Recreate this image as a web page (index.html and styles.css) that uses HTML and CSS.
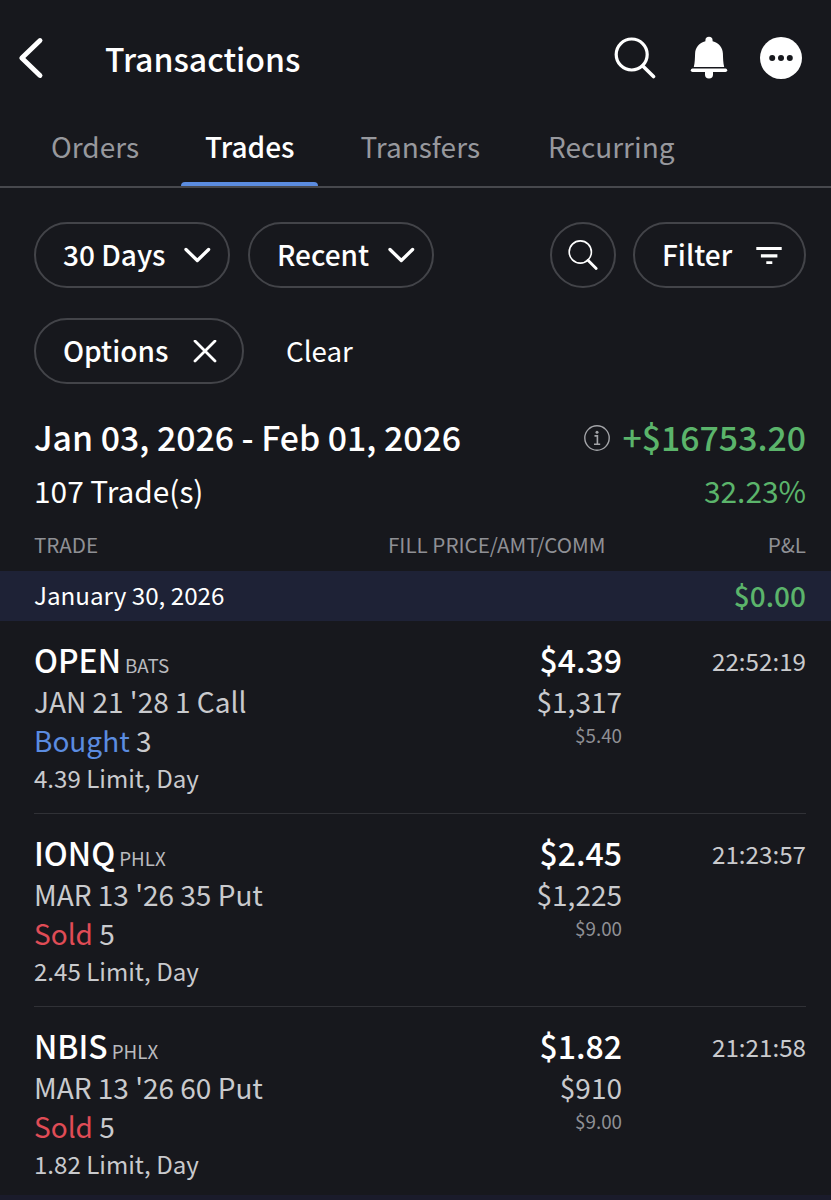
FILE: index.html
```
<!DOCTYPE html>
<html lang="en">
<head>
<meta charset="utf-8">
<title>Transactions</title>
<link rel="stylesheet" href="styles.css">
</head>
<body>
<div class="app">
  <header class="header">
    <svg class="back" viewBox="0 0 26 42" width="26" height="42"><path d="M22 3.500 3.800 21 22 38.500" fill="none" stroke="#fff" stroke-width="4.900" stroke-linecap="round" stroke-linejoin="round"/></svg>
    <h1 class="title">Transactions</h1>
    <div class="actions">
      <svg viewBox="0 0 42 42" width="42" height="42" fill="none" stroke="#fff" stroke-linecap="round"><circle cx="17.700" cy="17.500" r="15.500" stroke-width="3.200"/><path d="M28.800 29 39.500 39.500" stroke-width="3.600"/></svg>
      <svg viewBox="0 0 38 44" width="38" height="44" fill="#fff"><path d="M15.400 5.200V4.400a3.600 3.600 0 0 1 7.200 0v.8C29 6.900 32.600 11.500 32.900 17.500c.2 5 .2 9 1.300 13.500H3.800c1.100-4.500 1.100-8.500 1.300-13.500C5.400 11.500 9 6.900 15.400 5.200z"/><rect x=".8" y="32.600" width="36.400" height="3.400" rx="1.700"/><path d="M15 35h8v3.600a4 4 0 0 1-8 0z"/></svg>
      <svg viewBox="0 0 42 42" width="42" height="42"><circle cx="21" cy="21" r="21" fill="#fff"/><g fill="#17181d"><circle cx="12.200" cy="21" r="3"/><circle cx="21" cy="21" r="3"/><circle cx="29.800" cy="21" r="3"/></g></svg>
    </div>
  </header>

  <nav class="tabs">
    <a class="tab">Orders</a>
    <a class="tab active">Trades</a>
    <a class="tab">Transfers</a>
    <a class="tab">Recurring</a>
  </nav>

  <div class="filters">
    <button class="pill days"><span>30 Days</span><svg viewBox="0 0 28 18" width="28" height="18"><path d="M3 2.500 14.300 13.500 25.600 2.500" fill="none" stroke="#fff" stroke-width="3.300" stroke-linecap="round" stroke-linejoin="round"/></svg></button>
    <button class="pill recent"><span>Recent</span><svg viewBox="0 0 28 18" width="28" height="18"><path d="M3 2.500 14.300 13.500 25.600 2.500" fill="none" stroke="#fff" stroke-width="3.300" stroke-linecap="round" stroke-linejoin="round"/></svg></button>
    <button class="pill search"><svg viewBox="0 0 32 32" width="32" height="32" fill="none" stroke="#fff"><circle cx="13.300" cy="12" r="11.100" stroke-width="1.600"/><path d="M21 20.200 29.200 28.600" stroke-width="2.800" stroke-linecap="round"/></svg></button>
    <button class="pill filter"><span>Filter</span><svg viewBox="0 0 26 18" width="26" height="18" fill="#fff"><path d="M.300 0h25.400v2.900H.300zM4.900 7.200h16.500v3.300H4.900zM10.300 14.200h6v2.800h-6z"/></svg></button>
  </div>
  <div class="filters applied">
    <button class="pill options"><span>Options</span><svg viewBox="0 0 24 24" width="24" height="24"><path d="M2 1 22 21M22 1 2 21" fill="none" stroke="#fff" stroke-width="2.800" stroke-linecap="round"/></svg></button>
    <span class="clear">Clear</span>
  </div>

  <section class="summary">
    <div class="row total">
      <span>Jan 03, 2026 - Feb 01, 2026</span>
      <span class="gain"><svg viewBox="0 0 26 26" width="26" height="26" fill="none" stroke="#a3a4a8"><circle cx="13" cy="13" r="12.200" stroke-width="1.400"/><path d="M10.500 10.900h2.900V19M10 19.200h6.200" stroke-width="1.600"/><circle cx="13" cy="7.300" r="1.500" fill="#a3a4a8" stroke="none"/></svg>+$16753.20</span>
    </div>
    <div class="row count"><span>107 Trade(s)</span><span class="gain">32.23%</span></div>
    <div class="columns head"><span>TRADE</span><span>FILL PRICE/AMT/COMM</span><span>P&amp;L</span></div>
  </section>

  <div class="row day"><span>January 30, 2026</span><b class="gain">$0.00</b></div>

  <main>
    <article class="columns trade">
      <div><div class="symbol">OPEN<small>BATS</small></div><div class="contract">JAN 21 '28 1 Call</div><div class="side"><i class="buy">Bought</i> 3</div><div class="order">4.39 Limit, Day</div></div>
      <div><div class="price">$4.39</div><div class="amount">$1,317</div><div class="fee">$5.40</div></div>
      <time>22:52:19</time>
    </article>
    <article class="columns trade">
      <div><div class="symbol">IONQ<small>PHLX</small></div><div class="contract">MAR 13 '26 35 Put</div><div class="side"><i class="sell">Sold</i> 5</div><div class="order">2.45 Limit, Day</div></div>
      <div><div class="price">$2.45</div><div class="amount">$1,225</div><div class="fee">$9.00</div></div>
      <time>21:23:57</time>
    </article>
    <article class="columns trade">
      <div><div class="symbol">NBIS<small>PHLX</small></div><div class="contract">MAR 13 '26 60 Put</div><div class="side"><i class="sell">Sold</i> 5</div><div class="order">1.82 Limit, Day</div></div>
      <div><div class="price">$1.82</div><div class="amount">$910</div><div class="fee">$9.00</div></div>
      <time>21:21:58</time>
    </article>
  </main>
  <footer class="bottom"></footer>
</div>
</body>
</html>
```
FILE: styles.css
```
* { box-sizing: border-box; }
body {
  margin: 0;
  background: #17181d;
  color: #fff;
  font-family: "Noto Sans CJK SC", "Noto Sans", sans-serif;
}
svg { display: block; flex: none; }
.app { width: 831px; height: 1200px; overflow: hidden; display: flex; flex-direction: column; }

.header { height: 114px; flex: none; display: flex; align-items: center; padding: 2px 29px 0 18px; }
.title { margin: 0 0 0 61px; font-size: 32px; line-height: 40px; font-weight: 500; }
.actions { margin-left: auto; display: flex; align-items: center; gap: 32px; }
.actions svg:nth-child(2) { margin-left: 2px; }

.tabs {
  height: 74px; flex: none; display: flex; gap: 19px;
  padding-left: 28px; border-bottom: 2px solid #47484d;
}
.tab {
  position: relative; padding: 12px 23px 0; font-size: 28px; line-height: 40px; color: #97989d;
}
.tab.active { padding: 12px 24px 0; color: #fff; font-weight: 500; }
.tab:last-child { margin-left: 3px; }
.tab.active::after {
  content: ""; position: absolute; left: 0; right: 0; bottom: 0; height: 4px;
  background: #5b8ce0; border-radius: 4px 4px 0 0;
}

.filters { display: flex; align-items: center; padding: 34px 25px 0 34px; height: 100px; flex: none; }
.pill {
  height: 66px; padding: 0 17px 0 27px; display: flex; align-items: center; justify-content: space-between;
  background: none; border: 2px solid #434449; border-radius: 33px;
  color: #fff; font: 500 28px/36px "Noto Sans CJK SC", "Noto Sans", sans-serif;
}
.pill span { margin-top: -2px; }
.pill svg { margin-top: 1px; }
.days { width: 196px; }
.recent { width: 186px; margin-left: 18px; }
.search { width: 66px; margin-left: auto; padding: 0; justify-content: center; }
.filter { width: 173px; margin-left: 17px; padding-right: 22px; }
.applied { height: 96px; padding-top: 30px; }
.options { width: 210px; padding-right: 25px; }
.clear { margin: -3px 0 0 42px; font-size: 27.700px; line-height: 36px; }

.summary { height: 187px; flex: none; padding-top: 33px; }
.row { display: flex; justify-content: space-between; align-items: center; padding: 0 25px 0 34px; }
.total { height: 40px; font-size: 33.800px; line-height: 40px; font-weight: 500; }
.total .gain { display: flex; align-items: center; gap: 13px; }
.total svg { margin-top: 1px; }
.gain { color: #5bb46b; }
.count { height: 66px; font-size: 29.850px; line-height: 40px; }
.columns { display: grid; grid-template-columns: 300px 288px 1fr; padding: 0 25px 0 34px; }
.columns > :nth-child(n+2) { text-align: right; }
.head { grid-template-columns: 300px 271.500px 1fr; font-size: 20.600px; line-height: 42px; color: #8f9095; }

.day { height: 50px; flex: none; background: #1e2236; font-size: 24.200px; line-height: 48px; padding-bottom: 2px; }
.day b { font-size: 28px; font-weight: 500; }

.trade { height: 193px; padding-top: 18px; position: relative; color: #c9cacd; }
.trade:not(:last-child)::after {
  content: ""; position: absolute; left: 34px; right: 25px; bottom: 0; height: 1px; background: #303136;
}
.symbol { font-size: 31.800px; line-height: 41px; height: 41px; font-weight: 500; color: #fff; }
.symbol small { margin-left: 4px; font-size: 18.800px; line-height: 20px; font-weight: 400; color: #b9babe; }
.contract { font-size: 28px; line-height: 43px; height: 41px; }
.side { font-size: 28px; line-height: 39px; height: 39px; }
.side i { font-style: normal; }
.buy { color: #5b8ce0; }
.sell { color: #e04c56; }
.order { font-size: 24.100px; line-height: 36px; height: 36px; }
.price { font-size: 32px; line-height: 40px; font-weight: 500; color: #fff; }
.amount { font-size: 28px; line-height: 45px; }
.fee { font-size: 18.800px; line-height: 22px; color: #8f9095; }
.trade time { font-size: 24.200px; line-height: 44px; }
.bottom { height: 5px; flex: none; margin-top: -5px; background: #1a1b2b; z-index: 1; }
```
